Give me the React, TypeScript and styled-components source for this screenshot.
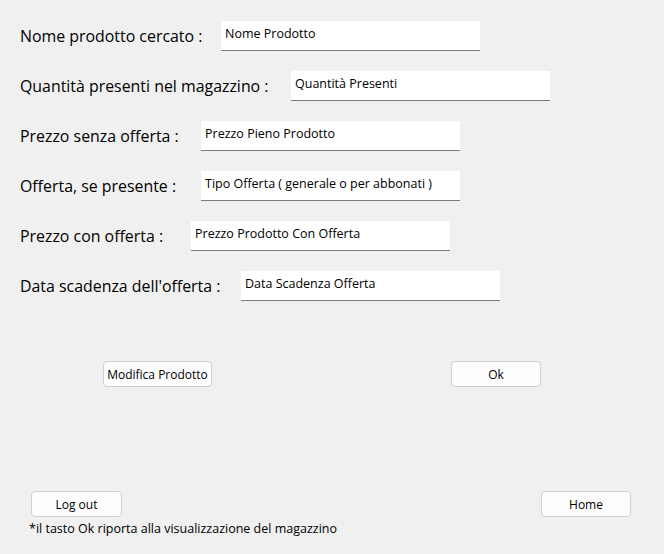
import React from "react";
import styled, { createGlobalStyle } from "styled-components";

const Global = createGlobalStyle`
  html, body { margin: 0; padding: 0; background: #f0f0f0; }
  * { box-sizing: border-box; }
`;

const Page = styled.div`
  width: 664px;
  height: 554px;
  background: #f0f0f0;
  font-family: "Open Sans", "Noto Sans", sans-serif;
  color: #000;
  display: flex;
  flex-direction: column;
  padding: 21px 0 0 0;
`;

const Form = styled.div`
  display: flex;
  flex-direction: column;
  gap: 20px;
  padding-left: 20px;
`;

const Row = styled.div`
  display: flex;
  align-items: center;
  height: 30px;
`;

const Label = styled.div<{ $w: number }>`
  width: ${(p) => p.$w}px;
  flex: none;
  font-size: 15.9px;
  white-space: nowrap;
  color: #000;
`;

const Field = styled.div`
  width: 259px;
  height: 30px;
  background: #fff;
  border-bottom: 1px solid #7a7a7a;
  font-size: 12.5px;
  padding: 5px 0 0 4px;
  line-height: 16px;
  color: #000;
  white-space: nowrap;
`;

const Actions = styled.div`
  display: flex;
  margin-top: 60px;
  padding-left: 103px;
  gap: 239px;
`;

const Button = styled.button<{ $w: number }>`
  width: ${(p) => p.$w}px;
  height: 26px;
  background: #fdfdfd;
  border: 1px solid #d0d0d0;
  border-radius: 4px;
  font-family: "Open Sans", "Noto Sans", sans-serif;
  font-size: 12px;
  color: #000;
  padding: 0;
  white-space: nowrap;
  cursor: pointer;
`;

const Bottom = styled.div`
  display: flex;
  justify-content: space-between;
  margin-top: 104px;
  padding: 0 33px 0 31px;
`;

const Note = styled.div`
  font-size: 12.5px;
  padding: 3px 0 0 29px;
  color: #000;
`;

const rows = [
  { label: "Nome prodotto cercato :", value: "Nome Prodotto", w: 201 },
  { label: "Quantità presenti nel magazzino :", value: "Quantità Presenti", w: 271 },
  { label: "Prezzo senza offerta :", value: "Prezzo Pieno Prodotto", w: 181 },
  { label: "Offerta, se presente :", value: "Tipo Offerta ( generale o per abbonati )", w: 181 },
  { label: "Prezzo con offerta :", value: "Prezzo Prodotto Con Offerta", w: 171 },
  { label: "Data scadenza dell'offerta :", value: "Data Scadenza Offerta", w: 221 },
];

export default function App() {
  return (
    <Page>
      <Global />
      <Form>
        {rows.map((r) => (
          <Row key={r.label}>
            <Label $w={r.w}>{r.label}</Label>
            <Field>{r.value}</Field>
          </Row>
        ))}
      </Form>
      <Actions>
        <Button $w={109}>Modifica Prodotto</Button>
        <Button $w={90}>Ok</Button>
      </Actions>
      <Bottom>
        <Button $w={91}>Log out</Button>
        <Button $w={90}>Home</Button>
      </Bottom>
      <Note>*il tasto Ok riporta alla visualizzazione del magazzino</Note>
    </Page>
  );
}
